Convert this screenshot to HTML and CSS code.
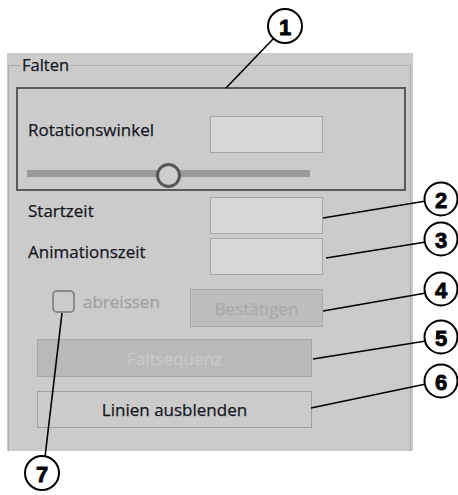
FILE: index.html
```html
<!DOCTYPE html>
<html lang="de">
  <head>
    <meta charset="UTF-8" />
    <meta name="viewport" content="width=device-width, initial-scale=1.0" />
    <title>Falten</title>
    <link rel="stylesheet" href="styles.css">
  </head>
  <body>
    <div class="sheet">
      <div class="panel">
        <fieldset class="group">
          <legend>Falten</legend>

          <div class="rot-box">
            <div class="field-row">
              <label for="rotation">Rotationswinkel</label>
              <input type="text" id="rotation" class="field" />
            </div>
            <div class="slider">
              <div class="track"></div>
              <div class="knob" style="left: calc(50% - 12.5px)"></div>
            </div>
          </div>

          <div class="times">
            <div class="field-row">
              <label for="startzeit">Startzeit</label>
              <input type="text" id="startzeit" class="field" />
            </div>
            <div class="field-row">
              <label for="animationszeit">Animationszeit</label>
              <input type="text" id="animationszeit" class="field" />
            </div>
          </div>

          <div class="options">
            <label class="check">
              <span class="box"></span>
              <span>abreissen</span>
            </label>
            <button type="button" class="btn btn-small" disabled>Bestätigen</button>
          </div>

          <button type="button" class="btn btn-wide btn-disabled" disabled>Faltsequenz</button>
          <button type="button" class="btn btn-wide btn-lines">Linien ausblenden</button>
        </fieldset>
      </div>

      <!-- callouts -->
      <svg class="callouts" width="458" height="495" viewBox="0 0 458 495">
        <g class="leaders">
          <line x1="274" y1="38" x2="226" y2="88" />
          <line x1="323" y1="218" x2="426" y2="201" />
          <line x1="326" y1="258" x2="426" y2="242" />
          <line x1="323" y1="311" x2="426" y2="293" />
          <line x1="313" y1="359" x2="426" y2="341" />
          <line x1="311" y1="408" x2="426" y2="384" />
          <line x1="62" y1="313" x2="45" y2="457" />
        </g>
        <g class="marks">
          <circle cx="285" cy="26" r="17" /><text x="285" y="27">1</text>
          <circle cx="441" cy="199" r="16.5" /><text x="441" y="200">2</text>
          <circle cx="441" cy="239" r="16.5" /><text x="441" y="240">3</text>
          <circle cx="441" cy="289" r="16.5" /><text x="441" y="290">4</text>
          <circle cx="441" cy="337" r="16.5" /><text x="441" y="338">5</text>
          <circle cx="441" cy="381" r="16.5" /><text x="441" y="382">6</text>
          <circle cx="42" cy="473" r="17" /><text x="42" y="474">7</text>
        </g>
      </svg>
    </div>
  </body>
</html>
```

FILE: styles.css
```css
body {
  margin: 0;
  background-color: #ffffff;
  font-family: "Open Sans", "Noto Sans", sans-serif;
  font-size: 17px;
  color: #16161e;
}

.sheet {
  position: relative;
  width: 458px;
  height: 495px;
  padding: 53px 0 0 7px;
  box-sizing: border-box;
}

.panel {
  width: 406px;
  height: 398px;
  padding: 3px 2px 0 1px;
  box-sizing: border-box;
  background-color: #cbcbcb;
  overflow: hidden;
  -webkit-text-stroke: 0.25px;
}

.group {
  margin: 0;
  padding: 0;
  height: 400px;
  border: 1px solid #adadad;
  border-bottom: none;
  box-sizing: border-box;
}

.group legend {
  margin-left: 12px;
  padding: 0 1px;
  line-height: 18px;
  font-size: 16.5px;
}

.rot-box {
  width: 390px;
  height: 104px;
  margin: 13px 0 0 7px;
  padding: 27px 0 0 10px;
  border: 2px solid #5a5a5a;
  box-sizing: border-box;
}

.field-row {
  display: flex;
  align-items: flex-start;
}

.field-row label {
  width: 182px;
  margin-top: 4px;
  line-height: 20px;
}

.field {
  width: 113px;
  height: 37px;
  margin: 0;
  padding: 0 6px;
  border: 1px solid #a6a6a6;
  background-color: #d8d8d8;
  box-sizing: border-box;
  font: inherit;
}

.slider {
  position: relative;
  width: 283px;
  height: 25px;
  margin: 10px 0 0 -1px;
  padding-top: 7px;
  box-sizing: border-box;
}

.track {
  height: 7px;
  background-color: #9a9a9a;
}

.knob {
  position: absolute;
  top: 0;
  width: 25px;
  height: 25px;
  border: 3.5px solid #565656;
  border-radius: 50%;
  background-color: #cdcdcd;
  box-sizing: border-box;
}

.times {
  margin: 6px 0 0 19px;
  display: flex;
  flex-direction: column;
  gap: 4px;
}

.options {
  display: flex;
  align-items: flex-start;
  margin: 14px 0 0 43px;
}

.check {
  display: flex;
  align-items: center;
  width: 138px;
  height: 25px;
  color: #a2a2a2;
}

.box {
  width: 23px;
  height: 23px;
  margin-right: 8px;
  border: 2px solid #8a8a8a;
  border-radius: 5px;
  box-sizing: border-box;
}

.btn {
  display: block;
  margin: 0;
  padding: 0;
  border: 1px solid #a8a8a8;
  box-sizing: border-box;
  font: inherit;
}

.btn-small {
  width: 133px;
  height: 38px;
  background-color: #bdbdbd;
  color: #a9a9a9;
}

.btn-wide {
  width: 275px;
  margin-left: 28px;
}

.btn-disabled {
  height: 38px;
  margin-top: 12px;
  background-color: #b9b9b9;
  color: #cacaca;
}

.btn-lines {
  height: 37px;
  margin-top: 14px;
  background-color: #cbcbcb;
  border-color: #9f9f9f;
  color: #16161e;
}

.callouts {
  position: absolute;
  top: 0;
  left: 0;
  pointer-events: none;
}

.leaders line {
  stroke: #000000;
  stroke-width: 1.6;
}

.marks circle {
  fill: #ffffff;
  stroke: #000000;
  stroke-width: 2;
}

.marks text {
  font-family: "Liberation Sans", Arial, sans-serif;
  font-weight: bold;
  font-size: 22px;
  text-anchor: middle;
  dominant-baseline: central;
  fill: #000000;
  stroke: #000000;
  stroke-width: 0.8;
}
```
